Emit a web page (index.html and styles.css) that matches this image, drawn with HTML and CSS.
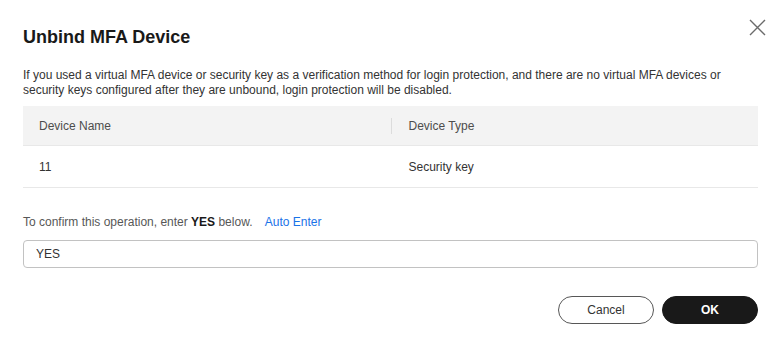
FILE: index.html
```html
<!DOCTYPE html>
<html lang="en">
<head>
    <meta charset="UTF-8">
    <title>Unbind MFA Device</title>
    <link rel="stylesheet" href="styles.css">
</head>
<body>

<div class="dialog">
    <div class="dialog-header">
        <h1>Unbind MFA Device</h1>
        <button class="close-button" aria-label="Close">
            <svg width="17" height="17" viewBox="0 0 17 17">
                <path d="M1 1L16 16M16 1L1 16" stroke="#6b6b6b" stroke-width="1.4" fill="none"/>
            </svg>
        </button>
    </div>

    <p class="notice">If you used a virtual MFA device or security key as a verification method for login protection, and there are no virtual MFA devices or security keys configured after they are unbound, login protection will be disabled.</p>

    <table class="device-table">
        <thead>
            <tr>
                <th>Device Name</th>
                <th class="with-divider">Device Type</th>
            </tr>
        </thead>
        <tbody>
            <tr>
                <td>11</td>
                <td>Security key</td>
            </tr>
        </tbody>
    </table>

    <div class="confirm-line">
        To confirm this operation, enter <strong>YES</strong> below.
        <a href="#" class="auto-enter">Auto Enter</a>
    </div>
    <input class="confirm-input" type="text" value="YES">

    <div class="dialog-footer">
        <button class="btn btn-cancel">Cancel</button>
        <button class="btn btn-ok">OK</button>
    </div>
</div>

</body>
</html>
```

FILE: styles.css
```css
body {
    font-family: 'Liberation Sans', Arial, sans-serif;
    background-color: #ffffff;
    color: #333333;
    margin: 0;
    padding: 0;
}
.dialog {
    padding: 24px 23px 0 23px;
}
.dialog-header {
    position: relative;
}
.dialog-header h1 {
    margin: 0;
    font-size: 18px;
    line-height: 26px;
    font-weight: bold;
    color: #191919;
}
.close-button {
    position: absolute;
    top: -5px;
    right: -8px;
    width: 17px;
    height: 17px;
    padding: 0;
    border: none;
    background: none;
    cursor: pointer;
}
.close-button svg {
    display: block;
}
.notice {
    margin: 18px 0 8px 0;
    font-size: 12px;
    line-height: 15px;
    color: #333333;
}
.device-table {
    width: 100%;
    border-collapse: collapse;
    font-size: 12px;
    table-layout: fixed;
}
.device-table th {
    background-color: #f3f3f3;
    color: #4d4d4d;
    font-weight: normal;
    text-align: left;
    height: 39px;
    padding: 0 16px;
    border-bottom: 1px solid #e8e8e8;
}
.device-table th.with-divider {
    position: relative;
    padding-left: 18px;
}
.device-table th.with-divider::before {
    content: "";
    position: absolute;
    left: 0;
    top: 12px;
    height: 16px;
    border-left: 1px solid #dcdcdc;
}
.device-table td {
    height: 41px;
    padding: 0 16px;
    color: #333333;
    border-bottom: 1px solid #e8e8e8;
}
.device-table td + td {
    padding-left: 18px;
}
.confirm-line {
    margin-top: 25px;
    font-size: 12px;
    line-height: 18px;
    color: #575757;
}
.confirm-line strong {
    color: #191919;
}
.auto-enter {
    color: #1a73e8;
    text-decoration: none;
    margin-left: 9px;
}
.confirm-input {
    display: block;
    box-sizing: border-box;
    width: 100%;
    height: 28px;
    margin-top: 9px;
    padding: 0 12px;
    font-family: inherit;
    font-size: 12px;
    color: #333333;
    border: 1px solid #c2c2c2;
    border-radius: 4px;
    outline: none;
}
.dialog-footer {
    display: flex;
    justify-content: flex-end;
    gap: 8px;
    margin-top: 28px;
}
.btn {
    width: 96px;
    height: 28px;
    border-radius: 14px;
    font-family: inherit;
    font-size: 12px;
    cursor: pointer;
    box-sizing: border-box;
}
.btn-cancel {
    background-color: #ffffff;
    border: 1px solid #575757;
    color: #333333;
}
.btn-ok {
    background-color: #191919;
    border: 1px solid #191919;
    color: #ffffff;
    font-weight: bold;
}
```
